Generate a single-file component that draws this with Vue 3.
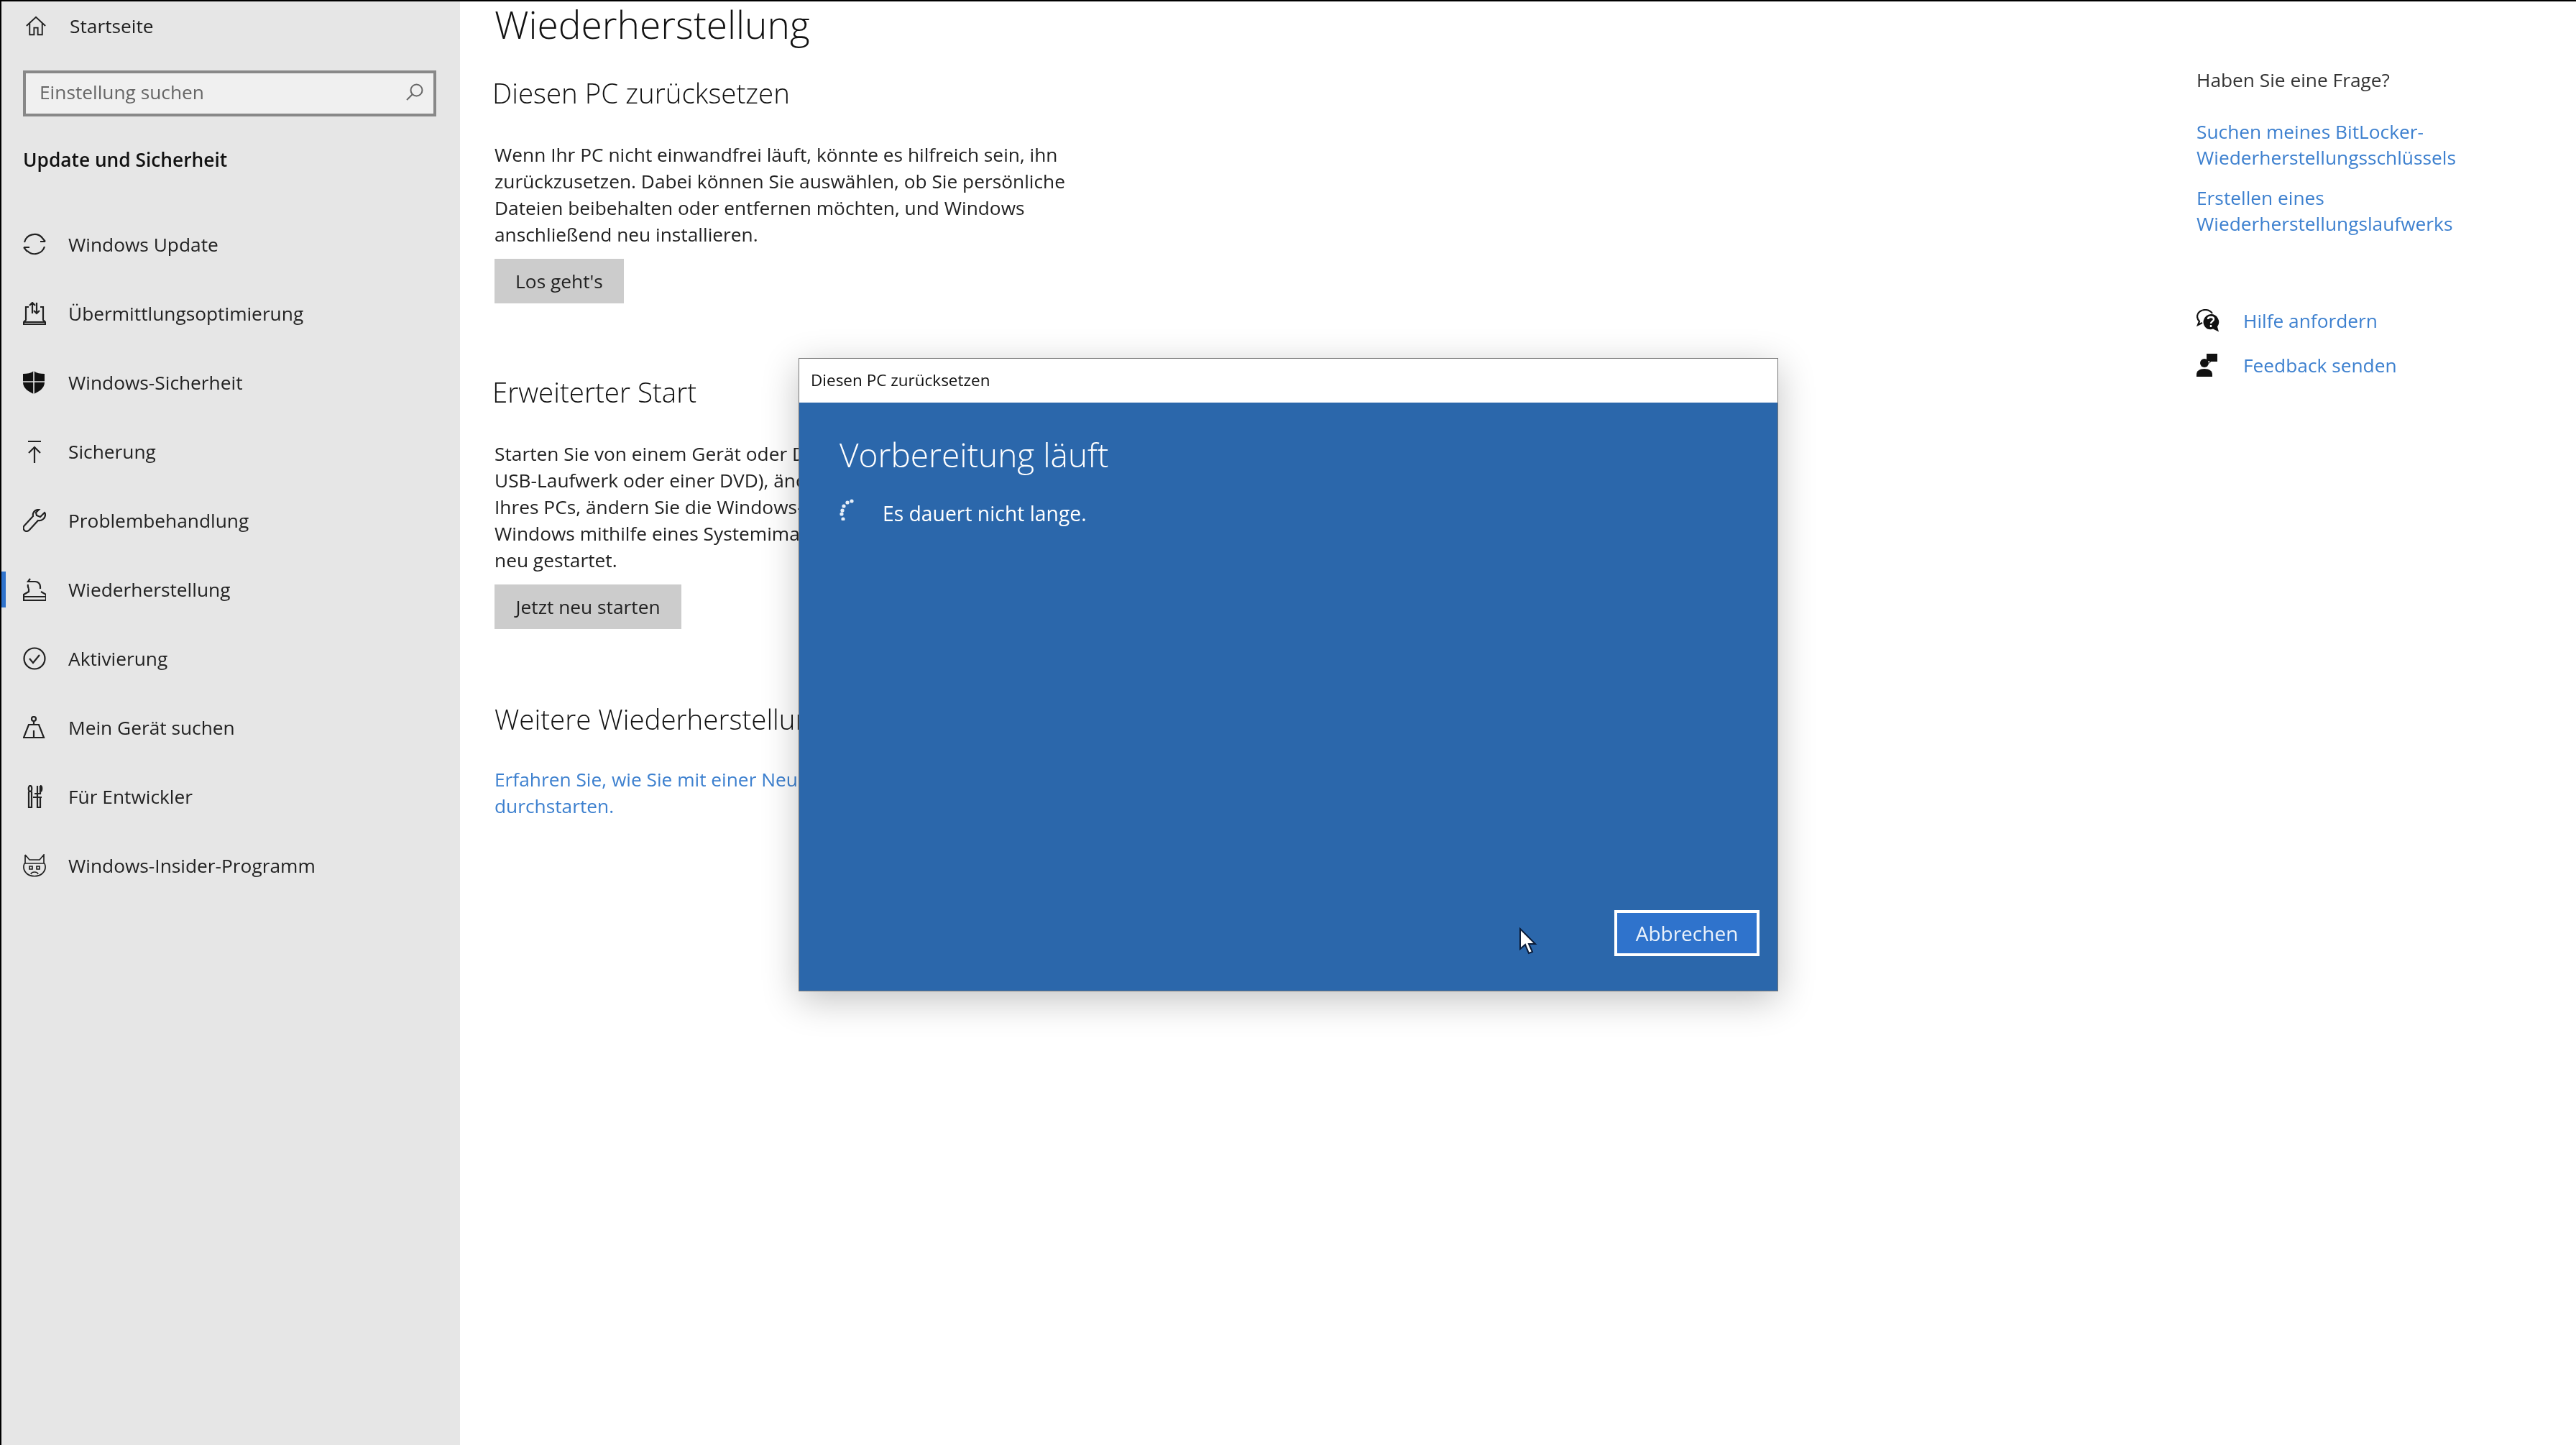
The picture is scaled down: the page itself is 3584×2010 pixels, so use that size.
<script setup>
const navItems = [
  { label: 'Windows Update', icon: 'sync' },
  { label: 'Übermittlungsoptimierung', icon: 'delivery' },
  { label: 'Windows-Sicherheit', icon: 'shield' },
  { label: 'Sicherung', icon: 'backup' },
  { label: 'Problembehandlung', icon: 'wrench' },
  { label: 'Wiederherstellung', icon: 'restore', active: true },
  { label: 'Aktivierung', icon: 'check' },
  { label: 'Mein Gerät suchen', icon: 'find' },
  { label: 'Für Entwickler', icon: 'dev' },
  { label: 'Windows-Insider-Programm', icon: 'insider' }
]
const spinnerDots = [
  [14, 2], [8, 4], [3, 9], [1, 15], [0, 20], [2, 27]
]
</script>

<template>
  <div class="screen">
    <aside class="sidebar">
      <div class="home-row">
        <svg class="icon home-icon" viewBox="0 0 32 32"><path d="M1 16 16 2l15 14M6 12v18h7V19h6v11h7V12" /></svg>
        <span class="nav-label">Startseite</span>
      </div>
      <div class="search">
        <span>Einstellung suchen</span>
        <svg class="search-icon" viewBox="0 0 24 24"><circle cx="14.5" cy="9.5" r="8" /><path d="M9 15 1 23" /></svg>
      </div>
      <div class="section-title">Update und Sicherheit</div>
      <nav class="nav">
        <div v-for="item in navItems" :key="item.label" class="nav-row" :class="{ active: item.active }">
          <svg class="icon" viewBox="0 0 32 32">
            <template v-if="item.icon === 'sync'">
              <path d="M2 13A14.5 14.5 0 0 1 27 7M31 12h-7M1 20h8M6 25a14.5 14.5 0 0 0 24-6M31 12 26 6M1 20l5 6" />
            </template>
            <template v-else-if="item.icon === 'delivery'">
              <path d="M8 7H4v18l-3 3v3h30v-3l-3-3V7h-4M1 28h30M13 16V1M9 5l4-4 4 4M19 1v15M15 12l4 4 4-4" />
            </template>
            <template v-else-if="item.icon === 'shield'">
              <path class="solid" d="M15 0C11 3 6 4 0 4v12c0 8 8 13 15 16 7-3 15-8 15-16V4c-6 0-11-1-15-4Z" />
              <path class="cut" d="M15 0v32M0 15h30" />
            </template>
            <template v-else-if="item.icon === 'backup'">
              <path d="M7 2h18M16 32V10M8 18l8-8 8 8" />
            </template>
            <template v-else-if="item.icon === 'wrench'">
              <path d="M21 1c-5 0-8 5-7 9L2 23c-3 3-1 8 3 8 2 0 3-1 4-2l12-13c5 1 10-3 10-8 0-1 0-2-1-3l-6 6-5-2-1-4 5-5c-1 0-1-1-2-1Z" />
            </template>
            <template v-else-if="item.icon === 'restore'">
              <path d="M11 5H7l3-4M7 5h10a7 7 0 0 1 7 7v3M8 15v4l-7 4v8h31v-8l-7-4M1 26h31M7 9a8 8 0 0 0 1 6" />
            </template>
            <template v-else-if="item.icon === 'check'">
              <circle cx="16" cy="16" r="14.5" /><path d="m9 16 5 6 9-11" />
            </template>
            <template v-else-if="item.icon === 'find'">
              <circle cx="15" cy="4" r="3" /><path d="M15 7v5M8 12h14l7 18H1ZM15 20v10" />
            </template>
            <template v-else-if="item.icon === 'dev'">
              <path d="M10 1C7 1 7 9 10 9M10 1c3 0 3 8 0 8M8 9v22h4V9M20 1v11M24 1v11h-8M20 12v19h4V18M24 1c3 0 3 8 0 8M14 17h12" />
            </template>
            <template v-else>
              <path class="thin" d="M3 1l6 7h14l6-7v12M3 1v12M2 13h28M2 13c-2 5-1 10 3 14 6 5 16 5 22 0 4-4 5-9 3-14M9 17h4v4H9ZM19 17h4v4h-4ZM11 28c1-4 9-4 10 0" />
            </template>
          </svg>
          <span class="nav-label">{{ item.label }}</span>
        </div>
      </nav>
    </aside>

    <main class="content">
      <h1 class="page-title">Wiederherstellung</h1>
      <h2 class="heading first">Diesen PC zurücksetzen</h2>
      <p class="para">Wenn Ihr PC nicht einwandfrei läuft, könnte es hilfreich sein, ihn<br>zurückzusetzen. Dabei können Sie auswählen, ob Sie persönliche<br>Dateien beibehalten oder entfernen möchten, und Windows<br>anschließend neu installieren.</p>
      <button class="action reset-btn">Los geht's</button>
      <h2 class="heading second">Erweiterter Start</h2>
      <p class="para start-para">Starten Sie von einem Gerät oder Datenträger aus (z. B. einem<br>USB-Laufwerk oder einer DVD), ändern Sie die Firmware-Einstellungen<br>Ihres PCs, ändern Sie die Windows-Starteinstellungen, oder stellen Sie<br>Windows mithilfe eines Systemimages wieder her. Dadurch wird Ihr PC<br>neu gestartet.</p>
      <button class="action restart-btn">Jetzt neu starten</button>
      <h2 class="heading third">Weitere Wiederherstellungsoptionen</h2>
      <p class="para link-para">Erfahren Sie, wie Sie mit einer Neuinstallation von Windows richtig<br>durchstarten.</p>
    </main>

    <aside class="help">
      <div class="help-title">Haben Sie eine Frage?</div>
      <a class="help-link first-link">Suchen meines BitLocker-<br>Wiederherstellungsschlüssels</a>
      <a class="help-link second-link">Erstellen eines<br>Wiederherstellungslaufwerks</a>
      <div class="help-action help-get">
        <svg class="help-icon" viewBox="0 0 32 32">
          <path class="line" d="M12 1C6 1 1 5 1 10c0 3 1 5 3 7l-2 5 6-3" />
          <path class="line" d="M12 1c4 0 8 2 10 5" />
          <path class="solid" d="M20 7a11 11 0 0 0-5 20.500c3 1 6 1 8 0l8 4-2-7a11 11 0 0 0-9-17.500Z" />
          <path class="cut" d="M16 14c0-4 8-4 8 0 0 3-4 3-4 6M20 22v3" />
        </svg>
        <a class="help-text">Hilfe anfordern</a>
      </div>
      <div class="help-action help-feedback">
        <svg class="help-icon" viewBox="0 0 32 32">
          <circle class="solid" cx="11" cy="13" r="6" />
          <path class="solid" d="M0 32v-3c0-5 4-8 11-8s11 3 11 8v3Z" />
          <path class="solid" d="M14 0h15v11H20l-2 3v-4h-4Z" />
        </svg>
        <a class="help-text">Feedback senden</a>
      </div>
    </aside>

    <section class="dialog">
      <header class="dialog-bar">Diesen PC zurücksetzen</header>
      <div class="dialog-body">
        <div class="dialog-title">Vorbereitung läuft</div>
        <div class="status">
          <svg class="spinner" viewBox="0 0 20 32">
            <circle v-for="(d, i) in spinnerDots" :key="i" :cx="d[0] + 3" :cy="d[1] + 3" r="2.600" />
          </svg>
          <span>Es dauert nicht lange.</span>
        </div>
        <div class="dialog-actions">
          <button class="cancel">Abbrechen</button>
        </div>
      </div>
    </section>

    <svg class="cursor" viewBox="0 0 26 40">
      <path d="M2 2v28l7-6 5 12 5-2-5-11h9Z" />
    </svg>
  </div>
</template>

<style scoped>
.screen {
  position: relative;
  display: flex;
  width: 3584px;
  height: 2010px;
  box-sizing: border-box;
  border-top: 2px solid #000;
  background: #fff;
  overflow: hidden;
  font-family: "Open Sans", "Liberation Sans", sans-serif;
  font-size: 26.300px;
  color: #1b1b1b;
  filter: blur(0.7px);
}
.sidebar {
  width: 640px;
  flex: none;
  box-sizing: border-box;
  border-left: 2px solid #000;
  background: #e6e6e6;
  padding: 0 0 0 30px;
}
.home-row {
  display: flex;
  align-items: center;
  height: 68px;
  padding-left: 4px;
}
.home-row .nav-label { margin-left: 33px; }
.icon {
  width: 32px;
  height: 32px;
  flex: none;
  fill: none;
  stroke: #222;
  stroke-width: 2.200;
}
.home-icon { width: 28px; height: 28px; }
.icon .solid { fill: #111; stroke: none; }
.icon .cut { stroke: #e6e6e6; stroke-width: 1.600; fill: none; }
.icon .thin { stroke-width: 1.700; }
.search {
  display: flex;
  align-items: center;
  justify-content: space-between;
  box-sizing: border-box;
  width: 575px;
  height: 64px;
  margin-top: 28px;
  padding: 0 14px 4px 19px;
  border: 4px solid #888;
  background: #f0f0f0;
  color: #666;
}
.search-icon {
  width: 24px;
  height: 24px;
  fill: none;
  stroke: #666;
  stroke-width: 2;
}
.section-title {
  height: 40px;
  line-height: 40px;
  margin-top: 40px;
  font-weight: 600;
  color: #111;
}
.nav { margin-top: 50px; }
.nav-row {
  position: relative;
  display: flex;
  align-items: center;
  height: 96px;
}
.nav-row.active::before {
  content: "";
  position: absolute;
  left: -30px;
  top: 23px;
  width: 6px;
  height: 50px;
  background: #2f73cc;
}
.nav-label { margin-left: 31px; margin-bottom: 1px; white-space: nowrap; color: #222; }
.content {
  width: 2416px;
  flex: none;
  box-sizing: border-box;
  padding-left: 48px;
}
.page-title {
  margin: 0;
  height: 64px;
  line-height: 64px;
  font-size: 53.300px;
  font-weight: 300;
  color: #111;
}
.heading {
  margin: 0;
  height: 44px;
  line-height: 44px;
  font-size: 38.500px;
  font-weight: 300;
  color: #111;
  white-space: nowrap;
}
.heading.first { margin-top: 41px; margin-left: -3px; }
.heading.second { margin-top: 101px; margin-left: -3px; }
.heading.third { margin-top: 103px; }
.para {
  margin: 46px 0 0;
  line-height: 37px;
  white-space: nowrap;
  color: #222;
}
.start-para { margin-top: 46px; }
.link-para { margin-top: 44px; color: #3d80cf; }
.action {
  display: block;
  height: 62px;
  margin-top: 15px;
  padding: 0;
  border: 0;
  background: #ccc;
  font: inherit;
  color: #222;
}
.reset-btn { width: 180px; }
.restart-btn { width: 260px; }
.help { flex: 1; }
.help-title { margin-top: 91px; line-height: 37px; color: #333; }
.help-link {
  display: block;
  line-height: 36px;
  color: #3d80cf;
}
.first-link { margin-top: 35px; }
.second-link { margin-top: 20px; }
.help-action {
  display: flex;
  align-items: center;
  height: 37px;
}
.help-get { margin-top: 98px; }
.help-feedback { margin-top: 25px; }
.help-icon {
  width: 32px;
  height: 32px;
  margin-right: 33px;
  flex: none;
}
.help-icon .solid { fill: #111; }
.help-icon .line { fill: none; stroke: #111; stroke-width: 2.200; }
.help-icon .cut { fill: none; stroke: #fff; stroke-width: 2.400; }
.help-text { color: #3d80cf; }
.dialog {
  position: absolute;
  left: 1111px;
  top: 496px;
  width: 1363px;
  height: 881px;
  box-sizing: border-box;
  display: flex;
  flex-direction: column;
  border: 1.500px solid #777;
  background: #2b67ab;
  box-shadow: 0 12px 48px rgba(0, 0, 0, 0.24);
}
.dialog-bar {
  height: 61px;
  line-height: 60px;
  flex: none;
  padding-left: 16px;
  background: #fff;
  font-size: 22.500px;
  color: #111;
}
.dialog-body {
  flex: 1;
  display: flex;
  flex-direction: column;
  padding: 42px 25px 48px 56px;
  color: #fff;
}
.dialog-title {
  height: 60px;
  line-height: 60px;
  font-size: 46px;
  font-weight: 300;
}
.status {
  display: flex;
  align-items: center;
  height: 44px;
  margin-top: 30px;
  font-size: 28.300px;
}
.spinner {
  width: 20px;
  height: 32px;
  margin-right: 40px;
  margin-top: -12px;
  fill: #e6eef8;
}
.dialog-actions {
  margin-top: auto;
  display: flex;
  justify-content: flex-end;
}
.cancel {
  width: 202px;
  height: 64px;
  border: 4px solid #fff;
  background: #2f73cc;
  font: inherit;
  font-size: 28px;
  color: #eaf2fb;
  padding: 0;
}
.cursor {
  position: absolute;
  left: 2113px;
  top: 1288px;
  width: 26px;
  height: 40px;
  fill: #fff;
  stroke: #0b1d3a;
  stroke-width: 2;
}
</style>

<style>
html, body { margin: 0; background: #fff; }
</style>
